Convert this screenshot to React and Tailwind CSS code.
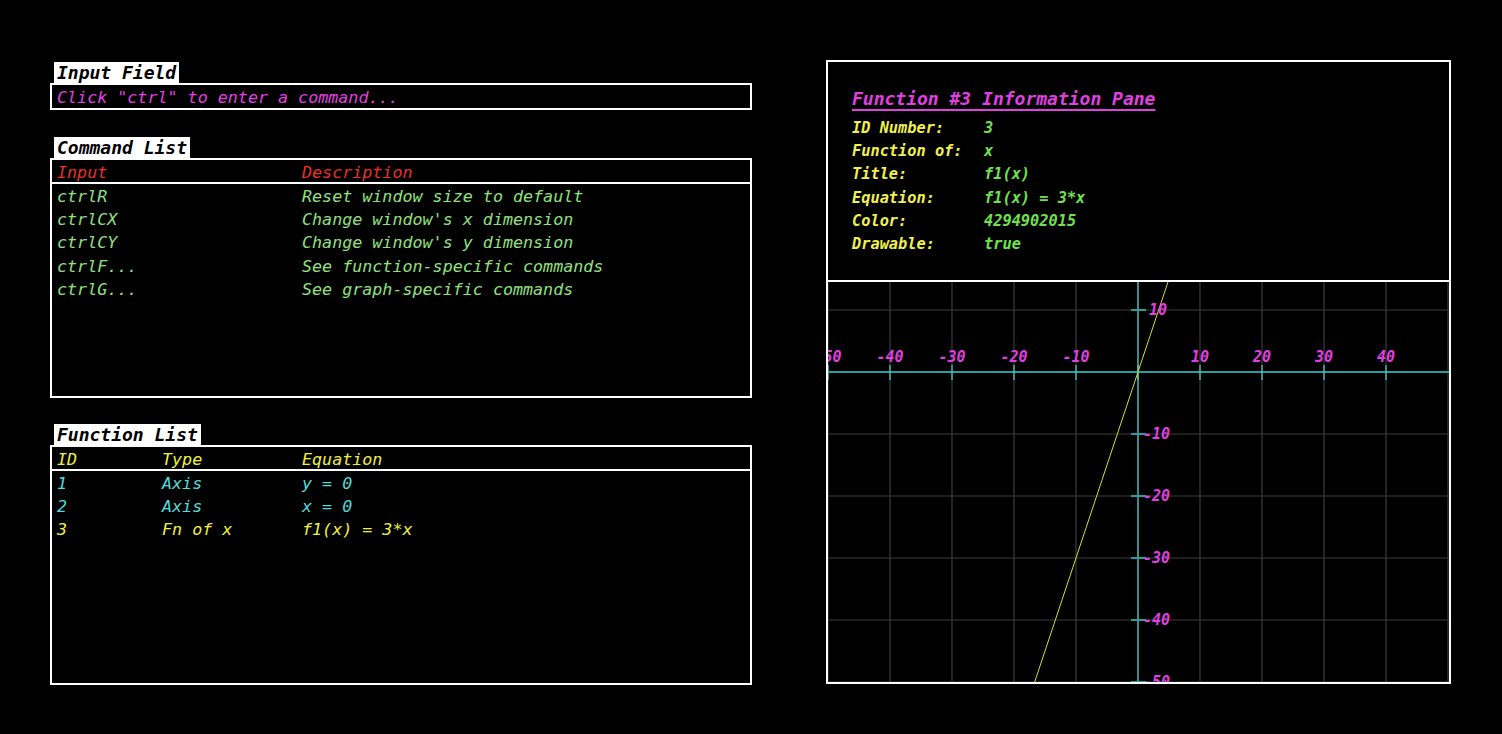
import React from 'react';

const mono = { fontFamily: '"DejaVu Sans Mono", "Liberation Mono", monospace' };

const commands = [
  ['ctrlR', 'Reset window size to default'],
  ['ctrlCX', "Change window's x dimension"],
  ['ctrlCY', "Change window's y dimension"],
  ['ctrlF...', 'See function-specific commands'],
  ['ctrlG...', 'See graph-specific commands'],
];

const functions = [
  { id: '1', type: 'Axis', eq: 'y = 0', color: 'text-[#50dcdc]' },
  { id: '2', type: 'Axis', eq: 'x = 0', color: 'text-[#50dcdc]' },
  { id: '3', type: 'Fn of x', eq: 'f1(x) = 3*x', color: 'text-[#f0f040]' },
];

const info = [
  ['ID Number:', '3'],
  ['Function of:', 'x'],
  ['Title:', 'f1(x)'],
  ['Equation:', 'f1(x) = 3*x'],
  ['Color:', '4294902015'],
  ['Drawable:', 'true'],
];

const Label = ({ children }) => (
  <div className="ml-1 self-start h-[21px] bg-white px-[3px] text-black font-bold italic text-[18px] leading-[22px]">
    {children}
  </div>
);

const Graph = () => {
  const ox = 310;
  const oy = 90;
  const step = 62;
  const xs = [-5, -4, -3, -2, -1, 0, 1, 2, 3, 4, 5];
  const xTicks = [-5, -4, -3, -2, -1, 0, 1, 2, 3, 4];
  const ys = [1, 0, -1, -2, -3, -4, -5];
  const xLabels = [-5, -4, -3, -2, -1, 1, 2, 3, 4];
  const yLabels = [1, -1, -2, -3, -4, -5];
  return (
    <svg width="621" height="400" viewBox="0 0 621 400" className="block">
      {xs.map(k => (
        <line key={'gx' + k} x1={ox + k * step} y1="0" x2={ox + k * step} y2="400" stroke="#3c3c3c" strokeWidth="1.2" />
      ))}
      {ys.map(k => (
        <line key={'gy' + k} x1="0" y1={oy - k * step} x2="621" y2={oy - k * step} stroke="#3c3c3c" strokeWidth="1.2" />
      ))}
      <line x1="0" y1={oy} x2="621" y2={oy} stroke="#2a9e9e" strokeWidth="2" />
      <line x1={ox} y1="0" x2={ox} y2="400" stroke="#50d0d0" strokeWidth="1.2" />
      {xTicks.map(k => (
        <line key={'tx' + k} x1={ox + k * step} y1="83" x2={ox + k * step} y2="98" stroke="#50d0d0" strokeWidth="1.2" />
      ))}
      {ys.map(k => (
        <line key={'ty' + k} x1="303" y1={oy - k * step} x2="318" y2={oy - k * step} stroke="#2a9e9e" strokeWidth="2" />
      ))}
      <line x1={ox - 124} y1={oy + 372} x2={ox + 124} y2={oy - 372} stroke="#d8d820" strokeWidth="1" />
      {xLabels.map(k => (
        <text
          key={'lx' + k}
          x={ox + k * step}
          y="80"
          textAnchor="middle"
          fill="#e040e0"
          fontFamily='"DejaVu Sans Mono", monospace'
          fontWeight="bold"
          fontStyle="italic"
          fontSize="15"
        >
          {k * 10}
        </text>
      ))}
      {yLabels.map(k => (
        <text
          key={'ly' + k}
          x={k > 0 ? 321 : 315}
          y={oy - k * step + 5}
          fill="#e040e0"
          fontFamily='"DejaVu Sans Mono", monospace'
          fontWeight="bold"
          fontStyle="italic"
          fontSize="15"
        >
          {k * 10}
        </text>
      ))}
    </svg>
  );
};

export default function App() {
  return (
    <div className="w-[1502px] h-[734px] bg-black flex items-start pl-[50px] pt-[60px]" style={mono}>
      <div className="w-[702px] flex flex-col pt-[2px]">
        <Label>Input Field</Label>
        <div className="h-[27px] border-2 border-white pl-[5px] text-[#e040e0] italic text-[16.7px] leading-[25px]">
          Click "ctrl" to enter a command...
        </div>

        <div className="mt-[27px] flex flex-col">
          <Label>Command List</Label>
          <div className="h-[240px] border-2 border-white flex flex-col">
            <div className="h-[24px] border-b-2 border-white flex pl-[5px] text-[#e8302a] italic text-[16.7px] leading-[24px]">
              <div className="w-[245px]">Input</div>
              <div>Description</div>
            </div>
            <div className="pt-px">
              {commands.map(([c, d]) => (
                <div key={c} className="flex pl-[5px] text-[#90e080] italic text-[16.7px] leading-[23.2px]">
                  <div className="w-[245px]">{c}</div>
                  <div>{d}</div>
                </div>
              ))}
            </div>
          </div>
        </div>

        <div className="mt-[26px] flex flex-col">
          <Label>Function List</Label>
          <div className="h-[240px] border-2 border-white flex flex-col">
            <div className="h-[24px] border-b-2 border-white flex pl-[5px] text-[#f0f040] italic text-[16.7px] leading-[24px]">
              <div className="w-[105px]">ID</div>
              <div className="w-[140px]">Type</div>
              <div>Equation</div>
            </div>
            <div className="pt-px">
              {functions.map(f => (
                <div key={f.id} className={'flex pl-[5px] italic text-[16.7px] leading-[23.2px] ' + f.color}>
                  <div className="w-[105px]">{f.id}</div>
                  <div className="w-[140px]">{f.type}</div>
                  <div>{f.eq}</div>
                </div>
              ))}
            </div>
          </div>
        </div>
      </div>

      <div className="ml-[74px] w-[625px] h-[624px] border-2 border-white flex flex-col">
        <div className="h-[220px] shrink-0 border-b-2 border-white pl-[24px] pt-[25px]">
          <div className="text-[#e040e0] italic font-semibold text-[18px] leading-[24px] underline underline-offset-[4px] decoration-2">
            Function #3 Information Pane
          </div>
          <div className="mt-[6px]">
            {info.map(([k, v]) => (
              <div key={k} className="flex italic font-bold text-[15.3px] leading-[23.2px]">
                <div className="w-[132px] text-[#f0f050]">{k}</div>
                <div className="text-[#70e050]">{v}</div>
              </div>
            ))}
          </div>
        </div>
        <div className="h-[400px] shrink-0 overflow-hidden">
          <Graph />
        </div>
      </div>
    </div>
  );
}
